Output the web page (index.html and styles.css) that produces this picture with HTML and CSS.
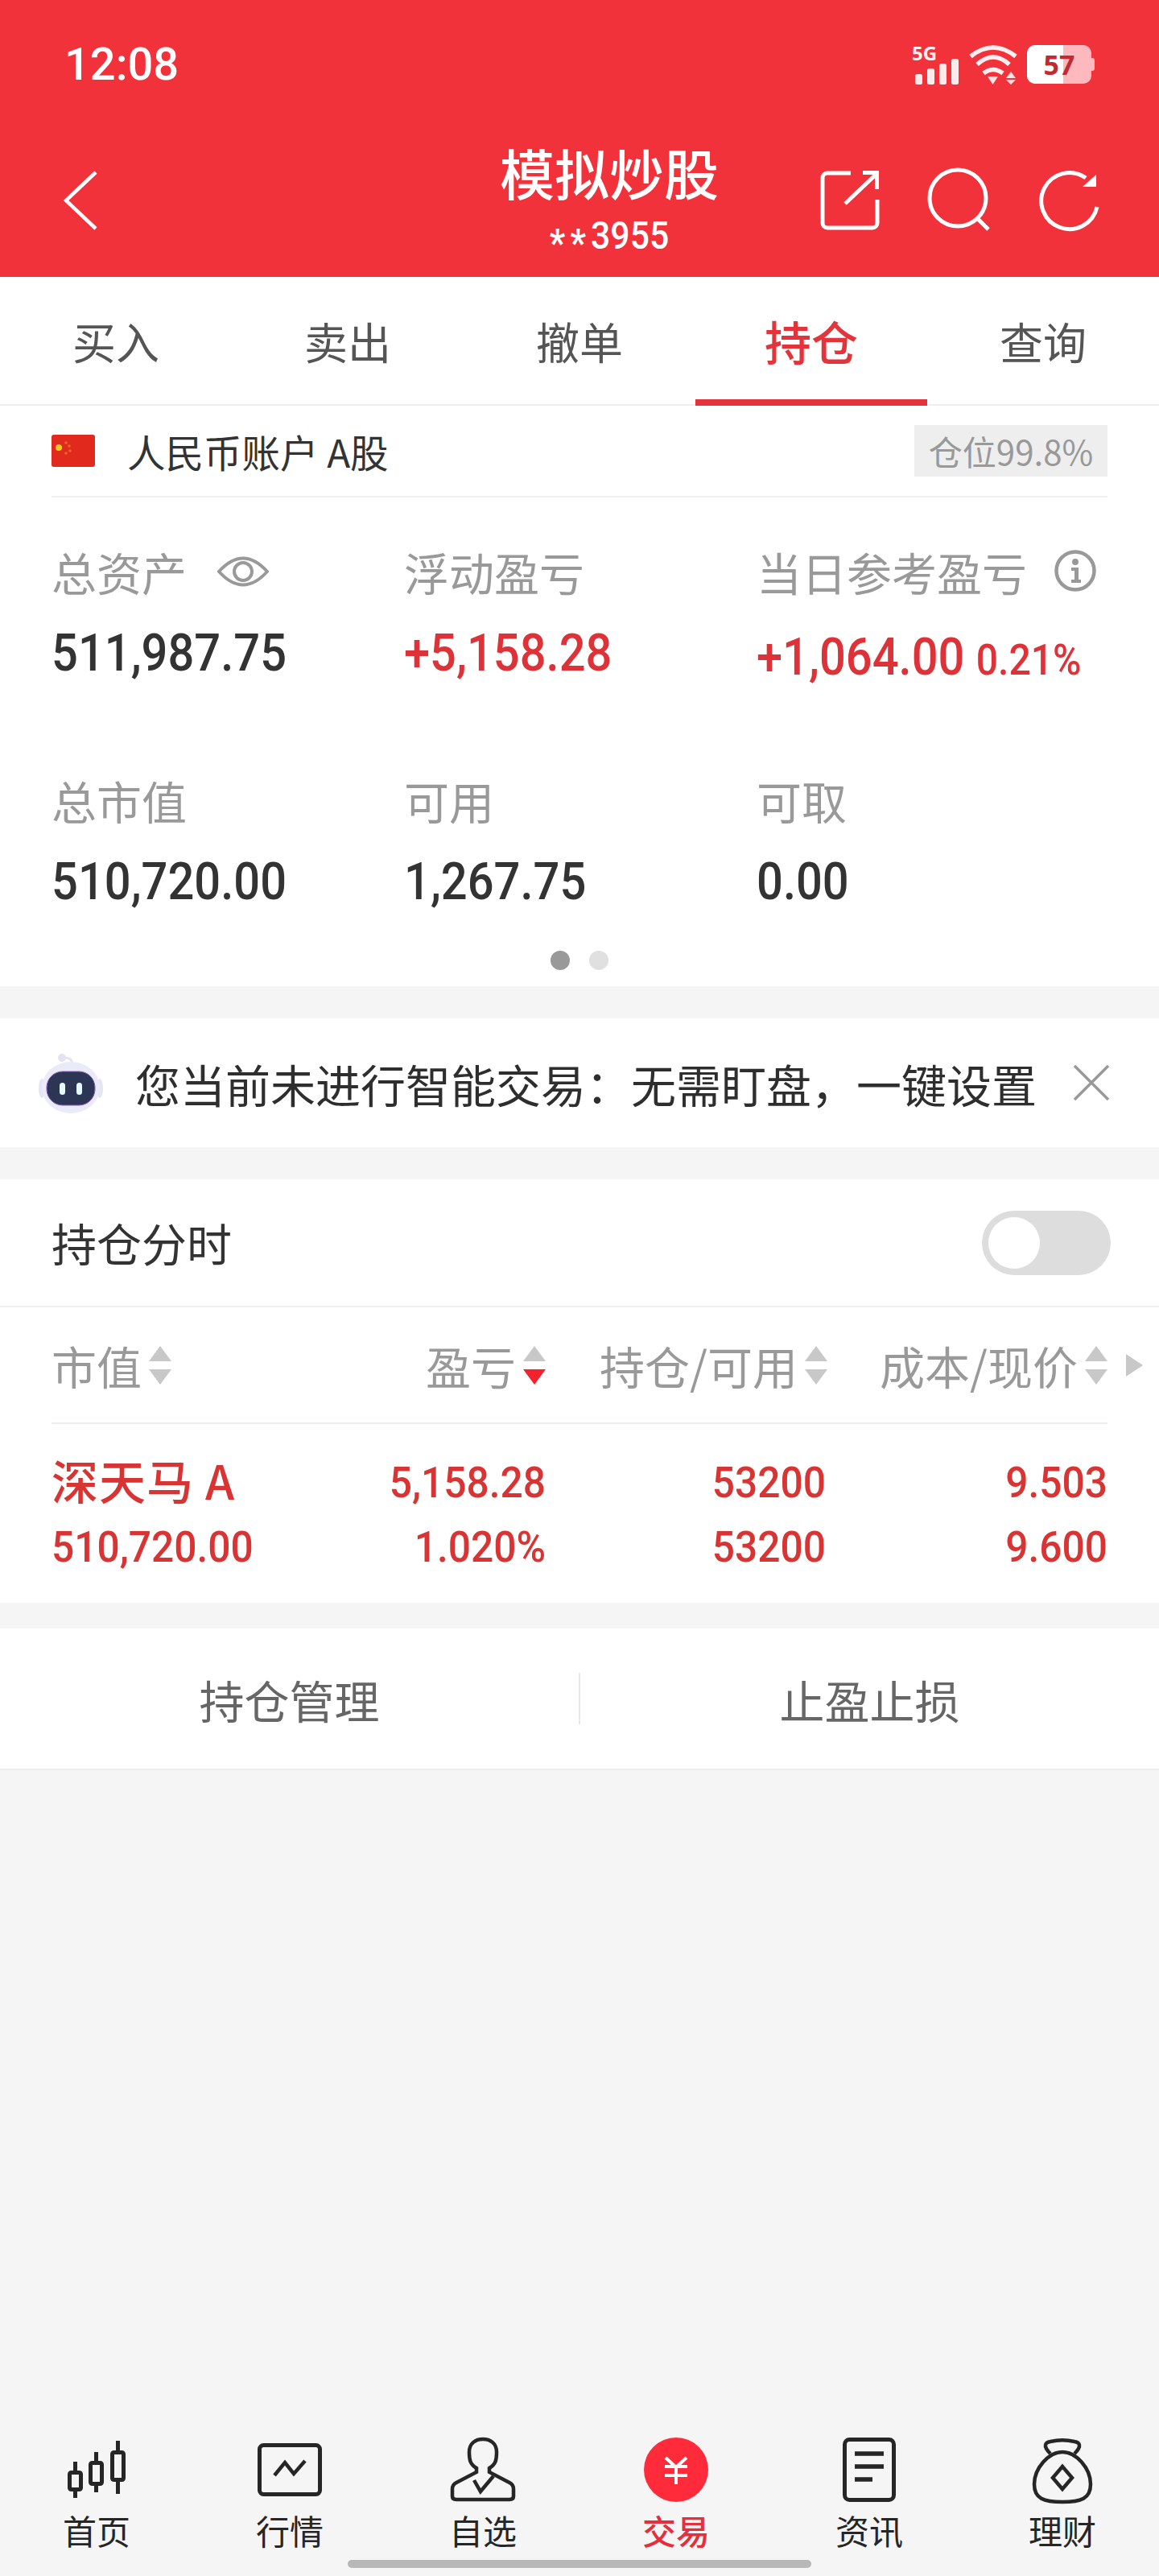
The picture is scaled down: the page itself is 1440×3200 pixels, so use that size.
FILE: index.html
```html
<!DOCTYPE html>
<html lang="zh-CN">
<head>
<meta charset="utf-8">
<title>模拟炒股</title>
<link rel="stylesheet" href="styles.css">
</head>
<body>
<div class="phone">
  <header class="top">
    <div class="status">
      <span class="time">12:08</span>
      <div class="status-icons">
        <svg class="sig" width="64" height="60" viewBox="0 0 64 60">
          <text x="1" y="29" class="fiveg">5G</text>
          <g fill="#fff" opacity=".9">
            <rect x="5" y="46" width="9" height="13" rx="2.500"/>
            <rect x="20" y="39" width="9" height="20" rx="2.500"/>
            <rect x="35" y="33" width="9" height="26" rx="2.500"/>
            <rect x="50" y="27" width="9" height="32" rx="2.500"/>
          </g>
        </svg>
        <svg class="wifi" width="60" height="50" viewBox="0 0 60 50">
          <g fill="none" stroke="#fff" stroke-width="5.500" opacity=".92">
            <path d="M2 14 Q30 -8 58 14"/>
            <path d="M10 24 Q30 6 50 24"/>
            <path d="M18 35 Q30 26 42 35"/>
          </g>
          <path d="M23 39 H36 L29.500 49 Z M46 41 H58 L52 33 Z M46 43 H58 L52 49 Z" fill="#fff" opacity=".85"/>
        </svg>
        <div class="batt"><span class="batt-fill"></span><span class="batt-num">57</span><i class="batt-nub"></i></div>
      </div>
    </div>
    <div class="nav">
      <svg class="back" width="44" height="74" viewBox="0 0 44 74"><path d="M41 2 L4 37 L41 72" fill="none" stroke="#fff" stroke-width="4.500"/></svg>
      <div class="title">
        <div class="title-main">模拟炒股</div>
        <div class="title-sub"><span class="stars">**</span>3955</div>
      </div>
      <div class="nav-actions">
        <svg width="74" height="74" viewBox="0 0 74 74"><g fill="none" stroke="#fff" stroke-width="5"><path d="M38 3 H9 a6 6 0 0 0 -6 6 V65 a6 6 0 0 0 6 6 H65 a6 6 0 0 0 6 -6 V36"/><path d="M31 41 L69 5"/></g><path d="M53 0 H73 V23 H68 V5 H53 Z" fill="#fff"/></svg>
        <svg width="82" height="82" viewBox="0 0 82 82"><g fill="none" stroke="#fff" stroke-width="5"><circle cx="40" cy="34" r="35"/><path d="M65 60 L78 73"/></g></svg>
        <svg width="78" height="80" viewBox="0 0 78 80"><path d="M74 45 A35 35 0 1 1 60 9" fill="none" stroke="#fff" stroke-width="5"/><path d="M73 5 V20 H56 Z" fill="#fff"/></svg>
      </div>
    </div>
  </header>

  <nav class="tabs">
    <div class="tab">买入</div>
    <div class="tab">卖出</div>
    <div class="tab">撤单</div>
    <div class="tab active">持仓</div>
    <div class="tab">查询</div>
  </nav>

  <section class="panel summary">
    <div class="account">
      <div class="account-name">
        <svg class="flag" width="54" height="40" viewBox="0 0 54 40"><rect width="54" height="40" rx="3" fill="#e1291d"/><circle cx="9" cy="16" r="4" fill="#f7c823"/><g fill="#ec6a24"><circle cx="18" cy="10" r="1.800"/><circle cx="22" cy="14" r="1.800"/><circle cx="23" cy="20" r="1.800"/><circle cx="18" cy="23" r="1.800"/></g></svg>
        <span>人民币账户 A股</span>
      </div>
      <div class="badge">仓位99.8%</div>
    </div>
    <div class="stats">
      <div class="stat">
        <div class="label">总资产
          <svg class="eye" width="64" height="46" viewBox="0 0 64 46"><path d="M2 23 Q32 -10 62 23 Q32 56 2 23 Z" fill="none" stroke="#999" stroke-width="4"/><circle cx="32" cy="23" r="11" fill="none" stroke="#999" stroke-width="4"/></svg>
        </div>
        <div class="value">511,987.75</div>
      </div>
      <div class="stat">
        <div class="label">浮动盈亏</div>
        <div class="value up">+5,158.28</div>
      </div>
      <div class="stat">
        <div class="label">当日参考盈亏
          <svg class="info" width="52" height="52" viewBox="0 0 52 52"><circle cx="26" cy="26" r="23.500" fill="none" stroke="#999" stroke-width="4.500"/><circle cx="26" cy="15" r="4" fill="#999"/><path d="M21 22 H30 V37 H33 V41 H21 V37 H25 V26 H21 Z" fill="#999"/></svg>
        </div>
        <div class="value up shift">+1,064.00 <small>0.21%</small></div>
      </div>
      <div class="stat">
        <div class="label">总市值</div>
        <div class="value">510,720.00</div>
      </div>
      <div class="stat">
        <div class="label">可用</div>
        <div class="value">1,267.75</div>
      </div>
      <div class="stat">
        <div class="label">可取</div>
        <div class="value">0.00</div>
      </div>
    </div>
    <div class="dots"><i class="dot on"></i><i class="dot"></i></div>
  </section>

  <section class="panel promo">
    <svg class="robot" width="80" height="80" viewBox="0 0 80 80">
      <path d="M33 9 Q41 9 42 16" fill="none" stroke="#e4e2f4" stroke-width="3"/>
      <circle cx="29" cy="9" r="5" fill="#e4e2f2"/>
      <ellipse cx="4" cy="47" rx="4" ry="12" fill="#e6e5f3"/>
      <ellipse cx="76" cy="47" rx="4" ry="12" fill="#e6e5f3"/>
      <ellipse cx="40" cy="46" rx="36" ry="32" fill="#ebeaf8"/>
      <rect x="10" y="26" width="60" height="42" rx="20" fill="#2c3654" stroke="#8d5cc4" stroke-width="1"/>
      <rect x="26" y="40" width="7" height="15" rx="3.500" fill="#e6fbff"/>
      <rect x="47" y="40" width="7" height="15" rx="3.500" fill="#e6fbff"/>
    </svg>
    <div class="promo-text">您当前未进行智能交易：无需盯盘，一键设置</div>
    <svg class="close" width="46" height="46" viewBox="0 0 46 46"><path d="M2 2 L44 44 M44 2 L2 44" stroke="#999" stroke-width="3.500" fill="none"/></svg>
  </section>

  <section class="panel holdings">
    <div class="switch-row">
      <span>持仓分时</span>
      <div class="toggle"><i class="knob"></i></div>
    </div>
    <div class="thead">
      <div class="th th-first">市值<span class="sort"><i class="up-a"></i><i class="down-a"></i></span></div>
      <div class="th">盈亏<span class="sort"><i class="up-a"></i><i class="down-a red"></i></span></div>
      <div class="th">持仓/可用<span class="sort"><i class="up-a"></i><i class="down-a"></i></span></div>
      <div class="th">成本/现价<span class="sort"><i class="up-a"></i><i class="down-a"></i></span></div>
      <i class="more"></i>
    </div>
    <div class="trow">
      <div class="cell first"><div class="stock">深天马 A</div><div class="num">510,720.00</div></div>
      <div class="cell"><div class="num">5,158.28</div><div class="num">1.020%</div></div>
      <div class="cell"><div class="num">53200</div><div class="num">53200</div></div>
      <div class="cell"><div class="num">9.503</div><div class="num">9.600</div></div>
    </div>
  </section>

  <section class="panel actions">
    <div class="action">持仓管理</div>
    <i class="action-sep"></i>
    <div class="action">止盈止损</div>
  </section>

  <div class="spacer"></div>

  <footer class="bottom">
    <div class="bar">
      <div class="item">
        <svg width="80" height="80" viewBox="0 0 80 80"><g fill="none" stroke="#262626" stroke-width="5"><rect x="6.500" y="43.500" width="14" height="21" rx="2"/><path d="M13.500 30 V43 M13.500 65 V75"/><rect x="32.500" y="31.500" width="14" height="26" rx="2"/><path d="M39.500 18 V31 M39.500 58 V68"/><rect x="59.500" y="18.500" width="14" height="34" rx="2"/><path d="M66.500 4 V18 M66.500 53 V70"/></g></svg>
        <span>首页</span>
      </div>
      <div class="item">
        <svg width="80" height="80" viewBox="0 0 80 80"><g fill="none" stroke="#262626"><rect x="2.500" y="9.500" width="75" height="61" rx="5" stroke-width="5"/><path d="M21 47 L34 31 L45 45 L59 29" stroke-width="4.500"/></g></svg>
        <span>行情</span>
      </div>
      <div class="item">
        <svg width="80" height="80" viewBox="0 0 80 80"><g fill="none" stroke="#262626" stroke-width="4.500"><path d="M32 43 V38 C24 33 23 28 23 18 C23 7 31 2 40 2 C49 2 57 7 57 18 C57 28 56 33 48 38 V43 L73 56 C77 58 78 61 78 64 V73 C78 76 76 77 73 77 H7 C4 77 2 76 2 73 V64 C2 61 3 58 7 56 Z"/><path d="M29 53 L37 67 L53 48"/></g></svg>
        <span>自选</span>
      </div>
      <div class="item current">
        <svg width="80" height="80" viewBox="0 0 80 80"><circle cx="40" cy="40" r="40" fill="#ff2b3a"/><path d="M27 25 L40 37 L53 25 M40 37 V58 M26 36 H54 M26 47 H54" fill="none" stroke="#fff" stroke-width="4"/></svg>
        <span>交易</span>
      </div>
      <div class="item">
        <svg width="80" height="80" viewBox="0 0 80 80"><g fill="none" stroke="#262626"><rect x="9.500" y="2.500" width="61" height="75" rx="6" stroke-width="5"/><path d="M22 20 H58 M22 36 H58 M22 52 H44" stroke-width="5.500"/></g></svg>
        <span>资讯</span>
      </div>
      <div class="item">
        <svg width="80" height="80" viewBox="0 0 80 80"><g fill="none" stroke="#262626" stroke-width="4.500"><path d="M25 20 C15 10 19 6 25 5 C34 3 46 3 55 5 C61 6 65 10 55 20"/><path d="M40 18 C23 18 5 38 5 58 C5 76 17 80 40 80 C63 80 75 76 75 58 C75 38 57 18 40 18 Z"/><path d="M40 36 L52 50 L40 64 L28 50 Z"/></g></svg>
        <span>理财</span>
      </div>
    </div>
    <div class="home-wrap"><i class="home"></i></div>
  </footer>
</div>
</body>
</html>
```
FILE: styles.css
```css
* { box-sizing: border-box; }
html, body { margin: 0; padding: 0; }
body {
  width: 1440px;
  height: 3200px;
  background: #f5f5f5;
  font-family: "Noto Sans CJK SC", "Liberation Sans", sans-serif;
  color: #2b2b2b;
}
.phone { width: 1440px; height: 3200px; display: flex; flex-direction: column; }

.top { height: 344px; background: #f1323b; color: #fff; display: flex; flex-direction: column; }
.status { height: 160px; padding: 48px 80px 0 80px; display: flex; justify-content: space-between; align-items: flex-start; }
.time { font-family: Roboto, sans-serif; font-size: 56px; line-height: 64px; font-weight: 500; }
.status-icons { display: flex; align-items: flex-start; gap: 8px; margin-top: 8px; }
.sig { margin-top: -10px; }
.fiveg { font-family: "Noto Sans", sans-serif; font-size: 24px; font-weight: 700; fill: #fff; opacity: .92; }
.batt { position: relative; width: 80px; height: 48px; background: #fdb9bd; border-radius: 10px; display: flex; align-items: center; justify-content: center; margin-left: 4px; margin-right: 4px; }
.batt-fill { position: absolute; left: 0; top: 0; bottom: 0; width: 45px; background: #fff; border-radius: 10px 0 0 10px; }
.batt-num { position: relative; font-family: "Noto Sans", sans-serif; font-weight: 700; font-size: 34px; line-height: 48px; color: #c22a33; }
.batt-nub { position: absolute; right: -4px; top: 16px; width: 4px; height: 16px; background: #fdb9bd; border-radius: 0 3px 3px 0; }

.nav { flex: 1; position: relative; display: flex; align-items: flex-start; padding: 52px 73px 0 78px; }
.title { position: absolute; left: 0; right: 0; top: 16px; text-align: center; padding-right: 2px; padding-left: 76px; }
.title-main { font-size: 68px; line-height: 76px; font-weight: 500; }
.title-sub { font-family: Roboto, sans-serif; font-weight: 500; font-size: 48px; line-height: 52px; margin-top: 15px; transform: scaleX(.89); }
.stars { letter-spacing: 7px; vertical-align: -9px; font-weight: 700; }
.nav-actions { position: relative; margin-left: auto; display: flex; align-items: flex-start; gap: 57px; }
.nav-actions svg { overflow: visible; }

.tabs { height: 160px; background: #fff; display: grid; grid-template-columns: repeat(5, 288px); border-bottom: 2px solid #eeeeee; }
.tab { display: flex; align-items: center; justify-content: center; font-size: 54px; color: #555; position: relative; }
.tab.active { color: #e3343b; font-size: 58px; font-weight: 500; }
.tab.active::after { content: ""; position: absolute; left: 0; right: 0; bottom: -2px; height: 8px; background: #e5333b; }

.panel { background: #fff; }
.summary { height: 721px; padding: 0 64px; display: flex; flex-direction: column; }
.account { height: 114px; flex: none; display: flex; align-items: center; justify-content: space-between; border-bottom: 2px solid #f0f0f0; }
.account-name { display: flex; align-items: center; gap: 40px; font-size: 47.500px; color: #333; }
.badge { width: 240px; height: 64px; background: #eeeeee; color: #999; font-size: 42px; line-height: 64px; text-align: center; white-space: nowrap; }
.stats { display: grid; grid-template-columns: 438px 438px 1fr; grid-template-rows: 284px auto; padding-top: 55px; }
.stat { display: flex; flex-direction: column; align-items: flex-start; }
.label { font-size: 56px; line-height: 74px; color: #999; display: flex; align-items: center; white-space: nowrap; }
.eye { margin-left: 38px; }
.info { margin-left: 34px; margin-top: -2px; }
.value { font-family: Roboto, sans-serif; font-weight: 500; font-size: 65px; line-height: 76px; margin-top: 26px; color: #333; white-space: nowrap; transform: scaleX(.89); transform-origin: left center; }
.value.up { color: #dd3338; }
.value.shift { margin-top: 31px; }
.value small { font-size: 54px; }
.dots { display: flex; justify-content: center; gap: 24px; margin-top: 48px; }
.dot { width: 24px; height: 24px; border-radius: 50%; background: #e0e0e0; }
.dot.on { background: #999; }

.promo { margin-top: 40px; height: 160px; display: flex; align-items: center; padding: 0 48px; }
.robot { flex: none; }
.promo-text { margin-left: 40px; font-size: 56px; color: #2e2e2e; white-space: nowrap; flex: 1; }
.close { margin-right: 13px; flex: none; }

.holdings { margin-top: 40px; height: 526px; display: flex; flex-direction: column; }
.switch-row { height: 159px; flex: none; padding: 0 60px 0 64px; display: flex; align-items: center; justify-content: space-between; font-size: 56px; line-height: 76px; color: #333; border-bottom: 2px solid #f0f0f0; }
.switch-row span { margin-top: -2px; }
.toggle { width: 160px; height: 80px; border-radius: 40px; background: #dddddd; padding: 8px; }
.knob { display: block; width: 64px; height: 64px; border-radius: 50%; background: #fff; }
.thead { height: 145px; flex: none; margin: 0 64px; display: grid; grid-template-columns: 314px 300px 350px 348px 0; align-items: center; font-size: 56px; color: #999; border-bottom: 2px solid #f0f0f0; }
.th { display: flex; justify-content: flex-end; align-items: center; white-space: nowrap; }
.th-first { justify-content: flex-start; }
.sort { display: flex; flex-direction: column; gap: 10px; margin-left: 9px; }
.up-a { width: 0; height: 0; border-left: 14px solid transparent; border-right: 14px solid transparent; border-bottom: 19px solid #c8c8c8; }
.down-a { width: 0; height: 0; border-left: 14px solid transparent; border-right: 14px solid transparent; border-top: 19px solid #c8c8c8; }
.down-a.red { border-top-color: #f5222d; }
.more { justify-self: start; margin-left: 23px; width: 0; height: 0; border-top: 14px solid transparent; border-bottom: 14px solid transparent; border-left: 21px solid #c8c8c8; }
.trow { flex: 1; display: grid; grid-template-columns: 316px 298px 348px 350px; padding: 33px 0 0 64px; align-items: start; color: #d93434; }
.cell { text-align: right; white-space: nowrap; }
.cell.first { text-align: left; }
.num { font-family: Roboto, sans-serif; font-weight: 500; font-size: 54px; line-height: 80px; transform: scaleX(.92); transform-origin: right center; }
.first .num { transform-origin: left center; }
.stock { font-weight: 500; font-size: 58px; height: 80px; line-height: 72px; letter-spacing: 1px; }

.actions { margin-top: 32px; height: 176px; display: flex; align-items: center; border-bottom: 2px solid #eeeeee; }
.action { flex: 1; text-align: center; font-size: 56px; color: #666; }
.action-sep { width: 2px; height: 64px; background: #e8e8e8; }

.spacer { flex: 1; }
.bottom { height: 172px; display: flex; flex-direction: column; }
.bar { display: grid; grid-template-columns: repeat(6, 240px); }
.item { display: flex; flex-direction: column; align-items: center; font-size: 42px; line-height: 46px; color: #262626; }
.item svg { overflow: visible; }
.item span { margin-top: 12px; }
.item.current span { color: #e4303c; font-weight: 500; }
.home-wrap { display: flex; justify-content: center; margin-top: 14px; }
.home { width: 576px; height: 10px; border-radius: 5px; background: #b8b8b8; }
```
